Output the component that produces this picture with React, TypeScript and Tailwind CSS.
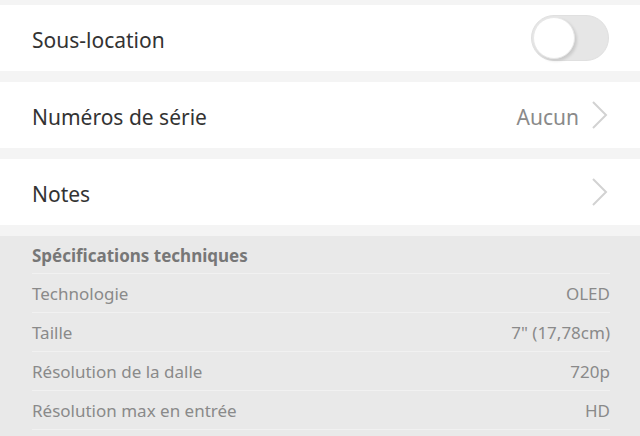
const specs = [
  ["Technologie", "OLED"],
  ["Taille", '7" (17,78cm)'],
  ["Résolution de la dalle", "720p"],
  ["Résolution max en entrée", "HD"],
];

function Chevron() {
  return (
    <svg width="18" height="30" viewBox="0 0 18 30" className="ml-3 shrink-0">
      <path d="M2 2 L15 15 L2 28" fill="none" stroke="#d2d2d2" strokeWidth="2" />
    </svg>
  );
}

function Toggle() {
  return (
    <div className="relative h-[46px] w-[78px] rounded-full border border-[#e0e0e0] bg-[#e6e6e6]">
      <div className="absolute left-[1px] top-[1px] h-[42px] w-[42px] rounded-full border border-[#e8e8e8] bg-white shadow-[2px_2px_3px_rgba(0,0,0,0.12)]" />
    </div>
  );
}

function Row({ label, children }: { label: string; children?: React.ReactNode }) {
  return (
    <div className="flex h-[66px] items-center justify-between bg-white pl-8 pr-[31px]">
      <span className="pt-[5px] text-[21px] text-[#333]">{label}</span>
      <div className="flex items-center">{children}</div>
    </div>
  );
}

export default function App() {
  return (
    <div className="flex h-[436px] w-[640px] flex-col overflow-hidden bg-[#f4f4f4] pt-[5px] font-['Noto_Sans',sans-serif]">
      <div className="flex flex-col gap-[11px]">
        <Row label="Sous-location">
          <Toggle />
        </Row>
        <Row label="Numéros de série">
          <span className="pt-[5px] text-[21px] text-[#8a8a8a]">Aucun</span>
          <Chevron />
        </Row>
        <Row label="Notes">
          <Chevron />
        </Row>
      </div>
      <div className="mt-[11px] flex-1 bg-[#e9e9e9] pl-8 pr-[30px]">
        <div className="flex h-[38px] items-center border-b border-[#f1f1f1] pt-[2px] text-[17px] font-bold text-[#777]">
          Spécifications techniques
        </div>
        {specs.map(([k, v]) => (
          <div
            key={k}
            className="flex h-[39px] items-center justify-between border-b border-[#f1f1f1] pt-[2px] text-[17px] text-[#8a8a8a]"
          >
            <span>{k}</span>
            <span>{v}</span>
          </div>
        ))}
      </div>
    </div>
  );
}
